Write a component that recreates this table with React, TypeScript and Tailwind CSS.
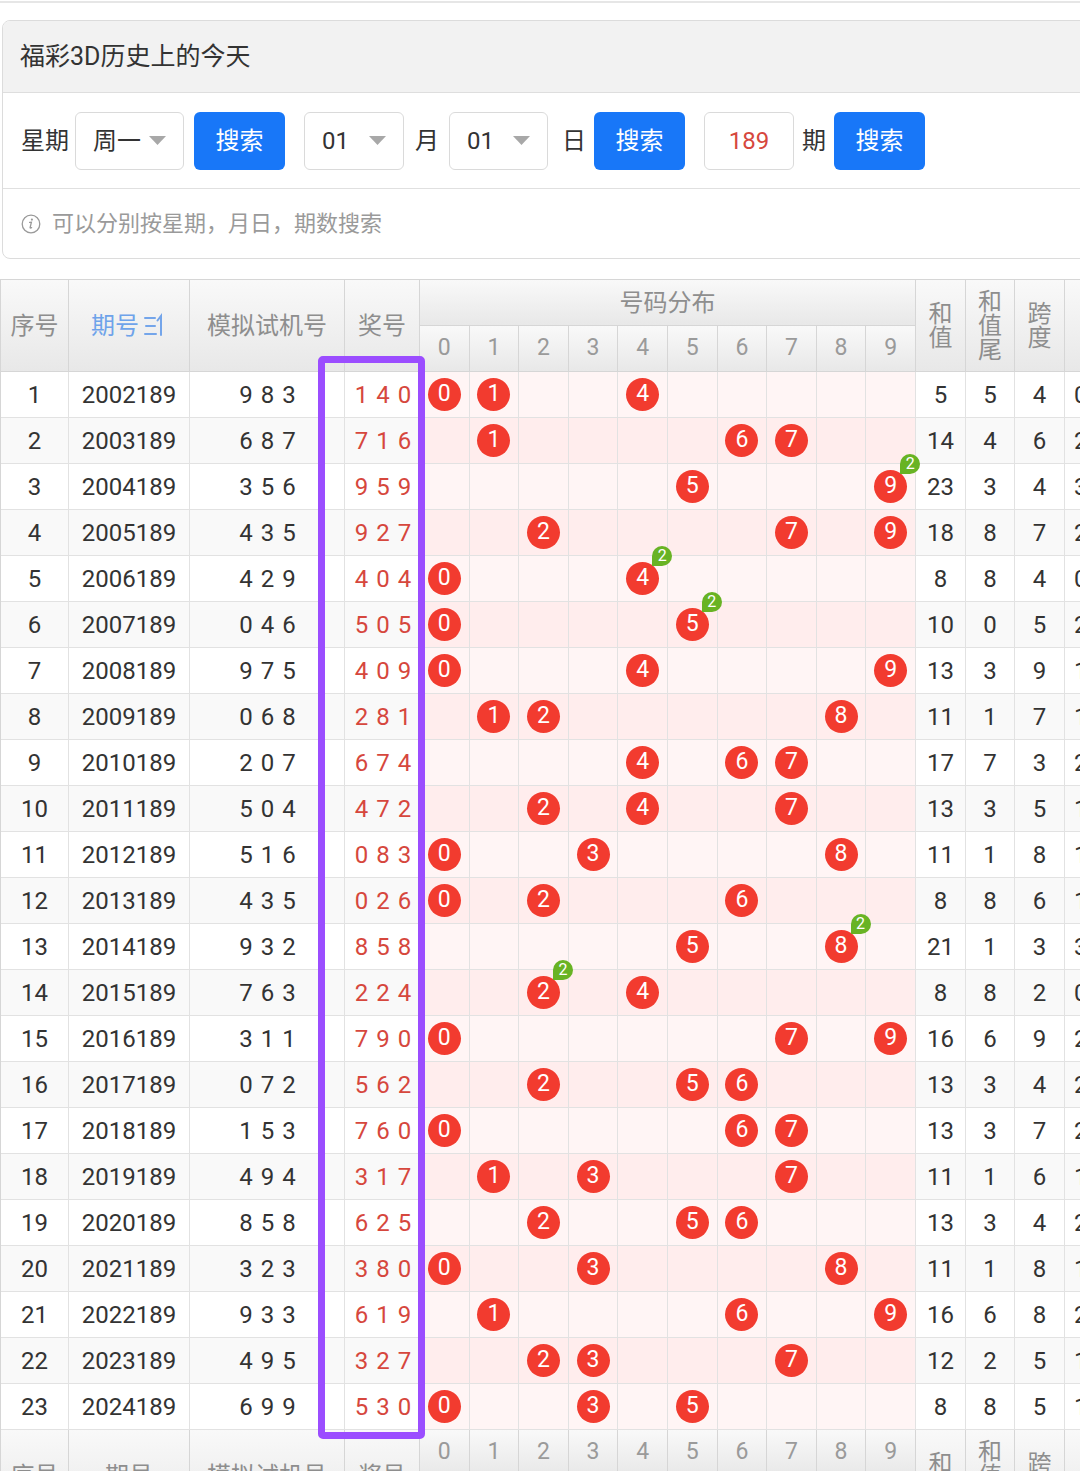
import React from 'react'

// 期号, 模拟试机号, 奖号, 和值, 和值尾, 跨度, 大小比
const rows: [string, string, string, number, number, number, string][] = [
  ['2002189', '983', '140', 5, 5, 4, '0:3'],
  ['2003189', '687', '716', 14, 4, 6, '2:1'],
  ['2004189', '356', '959', 23, 3, 4, '3:0'],
  ['2005189', '435', '927', 18, 8, 7, '2:1'],
  ['2006189', '429', '404', 8, 8, 4, '0:3'],
  ['2007189', '046', '505', 10, 0, 5, '2:1'],
  ['2008189', '975', '409', 13, 3, 9, '1:2'],
  ['2009189', '068', '281', 11, 1, 7, '1:2'],
  ['2010189', '207', '674', 17, 7, 3, '2:1'],
  ['2011189', '504', '472', 13, 3, 5, '1:2'],
  ['2012189', '516', '083', 11, 1, 8, '1:2'],
  ['2013189', '435', '026', 8, 8, 6, '1:2'],
  ['2014189', '932', '858', 21, 1, 3, '3:0'],
  ['2015189', '763', '224', 8, 8, 2, '0:3'],
  ['2016189', '311', '790', 16, 6, 9, '2:1'],
  ['2017189', '072', '562', 13, 3, 4, '2:1'],
  ['2018189', '153', '760', 13, 3, 7, '2:1'],
  ['2019189', '494', '317', 11, 1, 6, '1:2'],
  ['2020189', '858', '625', 13, 3, 4, '2:1'],
  ['2021189', '323', '380', 11, 1, 8, '1:2'],
  ['2022189', '933', '619', 16, 6, 8, '2:1'],
  ['2023189', '495', '327', 12, 2, 5, '1:2'],
  ['2024189', '699', '530', 8, 8, 5, '1:2'],
]

const digits = [0, 1, 2, 3, 4, 5, 6, 7, 8, 9]

function Caret() {
  return (
    <svg width="17" height="9" viewBox="0 0 17 9">
      <path d="M0 0 L17 0 L8.5 9 Z" fill="#a8a8a8" />
    </svg>
  )
}

function Select({ value, className }: { value: string; className: string }) {
  return (
    <div
      className={`h-[58px] flex items-center justify-between pl-[17px] pr-[17px] border border-[#dadada] rounded-[6px] bg-white text-[24px] text-[#333] ${className}`}
    >
      <span>{value}</span>
      <Caret />
    </div>
  )
}

function SearchButton({ className }: { className: string }) {
  return (
    <div
      className={`h-[58px] w-[91px] flex items-center justify-center rounded-[6px] bg-[#1877f8] text-white text-[24px] ${className}`}
    >
      搜索
    </div>
  )
}

function SortIcon() {
  return (
    <svg width="24" height="26" viewBox="0 0 24 26" className="ml-[4px]">
      <g stroke="#74a5ea" strokeWidth="2" fill="none" strokeLinecap="round">
        <path d="M2 5 H12" />
        <path d="M3 13 H12" />
        <path d="M2 21 H13" />
        <path d="M18 22 V3 L14.5 7.5" />
      </g>
    </svg>
  )
}

const headBg = 'bg-linear-to-b from-[#f9f9f9] to-[#e8e8e8]'
const headBorder = 'border-r border-b border-[#d6d6d6]'

function VText({ chars }: { chars: string }) {
  return (
    <div className="flex flex-col items-center leading-[24px] text-[24px]">
      {chars.split('').map((c, i) => (
        <span key={i}>{c}</span>
      ))}
    </div>
  )
}

function HeaderBlock({ footer }: { footer?: boolean }) {
  const tall = `h-[92px] flex items-center justify-center ${headBg} ${headBorder}`
  const groupTitle = (
    <div className={`h-[46px] flex items-center justify-center text-[24px] ${headBg} ${headBorder}`}>
      号码分布
    </div>
  )
  const digitRow = (
    <div className="flex h-[46px]">
      {digits.map((d) => (
        <div
          key={d}
          className={`w-[49.6px] h-[46px] flex items-center justify-center text-[23px] text-[#9a9a9a] ${headBg} ${headBorder}`}
        >
          {d}
        </div>
      ))}
    </div>
  )
  return (
    <div className="flex text-[#8e8e8e]">
      <div className={`w-[68px] text-[24px] ${tall}`}>序号</div>
      <div className={`w-[121px] text-[24px] ${tall} ${footer ? '' : 'text-[#6ea3ea]'}`}>
        期号
        {!footer && <SortIcon />}
      </div>
      <div className={`w-[155px] text-[24px] ${tall}`}>模拟试机号</div>
      <div className={`w-[75px] text-[24px] ${tall}`}>奖号</div>
      <div className="w-[496px] flex flex-col">
        {footer ? digitRow : groupTitle}
        {footer ? groupTitle : digitRow}
      </div>
      <div className={`w-[50px] ${tall}`}>
        <VText chars="和值" />
      </div>
      <div className={`w-[49px] ${tall}`}>
        <VText chars="和值尾" />
      </div>
      <div className={`w-[50px] ${tall}`}>
        <VText chars="跨度" />
      </div>
      {/* 大小比: its label sits past the right edge of the screen */}
      <div className={`w-[70px] ${tall}`} />
    </div>
  )
}

function Ball({ n, count }: { n: number; count: number }) {
  return (
    <div className="relative w-[33px] h-[33px] rounded-full bg-[#f23b2f] text-white text-[23px] flex items-center justify-center">
      {n}
      {count > 1 && (
        <div className="absolute z-10 left-[26px] top-[-16px] w-[20px] h-[20px] rounded-full rounded-bl-none bg-[#68b324] text-white text-[16px] leading-none flex items-center justify-center">
          {count}
        </div>
      )}
    </div>
  )
}

function BodyRow({ row, index }: { row: (typeof rows)[number]; index: number }) {
  const [period, sim, draw, sum, tail, span, ratio] = row
  const even = index % 2 === 1
  const plain = even ? 'bg-[#f9f9f9]' : 'bg-white'
  const pink = even ? 'bg-[#ffeded]' : 'bg-[#fff5f5]'
  const cell = 'h-[46px] flex items-center justify-center border-r border-b border-[#e2e2e2]'
  return (
    <div className="flex text-[24px] text-[#333]">
      <div className={`w-[68px] ${cell} ${plain}`}>{index + 1}</div>
      <div className={`w-[121px] ${cell} ${plain}`}>{period}</div>
      <div className={`w-[155px] ${cell} ${plain} tracking-[1px] pl-[2px]`}>{sim.split('').join(' ')}</div>
      <div className={`w-[75px] ${cell} ${plain} text-[#d6473d] tracking-[1px] pl-[3px]`}>
        {draw.split('').join(' ')}
      </div>
      {digits.map((d) => {
        const count = draw.split('').filter((c) => Number(c) === d).length
        return (
          <div key={d} className={`w-[49.6px] ${cell} ${pink}`}>
            {count > 0 && <Ball n={d} count={count} />}
          </div>
        )
      })}
      <div className={`w-[50px] ${cell} ${plain}`}>{sum}</div>
      <div className={`w-[49px] ${cell} ${plain}`}>{tail}</div>
      <div className={`w-[50px] ${cell} ${plain}`}>{span}</div>
      <div className={`w-[70px] ${cell} ${plain} justify-start pl-[9px]`}>{ratio}</div>
    </div>
  )
}

export default function App() {
  return (
    <div className="w-[1080px] h-[1471px] overflow-hidden bg-white font-['Roboto','Noto_Sans_CJK_SC',sans-serif]">
      <div className="h-[3px] border-b-2 border-[#e6e6e6]" />

      {/* Search panel */}
      <div className="mt-[17px] ml-[2px] w-[1110px] border border-[#dcdcdc] rounded-[8px] overflow-hidden">
        <div className="h-[72px] bg-[#f2f2f2] border-b border-[#dedede] flex items-center pl-[17px] text-[25px] text-[#333]">
          福彩3D历史上的今天
        </div>
        <div className="h-[96px] border-b border-[#e0e0e0] flex items-center pl-[18px] text-[24px] text-[#333]">
          <span>星期</span>
          <Select value="周一" className="ml-[6px] w-[109px]" />
          <SearchButton className="ml-[10px]" />
          <Select value="01" className="ml-[19px] w-[100px]" />
          <span className="ml-[11px]">月</span>
          <Select value="01" className="ml-[10px] w-[99px]" />
          <span className="ml-[14px]">日</span>
          <SearchButton className="ml-[8px]" />
          <div className="ml-[19px] w-[90px] h-[58px] border border-[#dadada] rounded-[6px] flex items-center justify-center text-[#d6473d]">
            189
          </div>
          <span className="ml-[8px]">期</span>
          <SearchButton className="ml-[8px]" />
        </div>
        <div className="h-[69px] flex items-center pl-[18px] text-[22px] text-[#9a9a9a]">
          <svg width="20" height="20" viewBox="0 0 20 20" className="mr-[11px]">
            <circle cx="10" cy="10" r="8.8" fill="none" stroke="#9a9a9a" strokeWidth="1.3" />
            <circle cx="10.9" cy="5.6" r="1.1" fill="#9a9a9a" />
            <path d="M8.6 8.4 L10.4 8.2 L9.1 13.6 Q9 14.4 10.6 13.6" fill="none" stroke="#9a9a9a" strokeWidth="1.3" strokeLinecap="round" />
          </svg>
          可以分别按星期，月日，期数搜索
        </div>
      </div>

      {/* Table */}
      <div className="relative mt-[20px] w-[1140px] border-l border-t border-[#d6d6d6]">
        <HeaderBlock />
        {rows.map((row, i) => (
          <BodyRow key={row[0]} row={row} index={i} />
        ))}
        <HeaderBlock footer />
        <div className="absolute z-20 pointer-events-none left-[317px] top-[76px] w-[107px] h-[1083px] border-[7px] border-[#9b4dff] rounded-[5px]" />
      </div>
    </div>
  )
}
